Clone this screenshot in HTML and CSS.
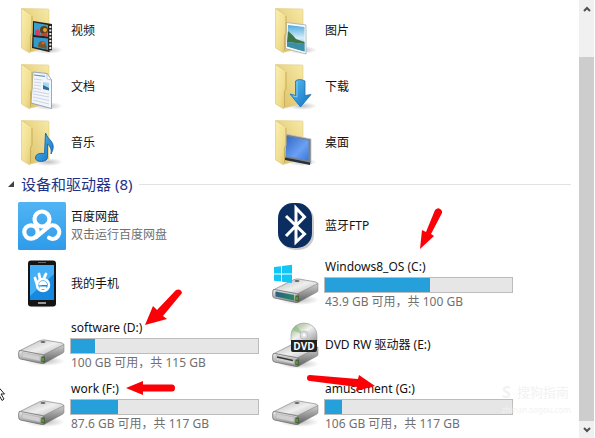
FILE: index.html
```html
<!DOCTYPE html>
<html lang="zh-CN">
  <head>
    <meta charset="UTF-8" />
    <meta name="viewport" content="width=device-width, initial-scale=1.0" />
    <title>设备和驱动器</title>
    <link rel="stylesheet" href="styles.css">
  </head>
  <body>
    <svg class="defs" aria-hidden="true">
      <defs>
        <linearGradient id="flap" x1="0" y1="0" x2="1" y2="1">
          <stop offset="0" stop-color="#fbefae" />
          <stop offset="0.6" stop-color="#f1de90" />
          <stop offset="1" stop-color="#dfc569" />
        </linearGradient>
        <linearGradient id="inside" x1="1" y1="0" x2="0" y2="1">
          <stop offset="0" stop-color="#f7e9a6" />
          <stop offset="1" stop-color="#d9bd62" />
        </linearGradient>
        <linearGradient id="blue" x1="0" y1="0" x2="1" y2="1">
          <stop offset="0" stop-color="#5bc0f0" />
          <stop offset="1" stop-color="#0f6fc4" />
        </linearGradient>
        <linearGradient id="sky" x1="0" y1="0" x2="0" y2="1">
          <stop offset="0" stop-color="#4fa9e0" />
          <stop offset="0.5" stop-color="#d5effa" />
          <stop offset="1" stop-color="#3f8fc4" />
        </linearGradient>
        <linearGradient id="screen" x1="0" y1="0" x2="1" y2="1">
          <stop offset="0" stop-color="#3467c4" />
          <stop offset="0.6" stop-color="#6aa0f4" />
          <stop offset="1" stop-color="#3a78dc" />
        </linearGradient>
        <linearGradient id="lid" x1="0" y1="0" x2="1" y2="1">
          <stop offset="0" stop-color="#b4b4b4" />
          <stop offset="0.5" stop-color="#efefef" />
          <stop offset="1" stop-color="#a8a8a8" />
        </linearGradient>
        <linearGradient id="front" x1="0" y1="0" x2="0" y2="1">
          <stop offset="0" stop-color="#eee" />
          <stop offset="1" stop-color="#888" />
        </linearGradient>
        <linearGradient id="side" x1="0" y1="0" x2="0" y2="1">
          <stop offset="0" stop-color="#d0d0d0" />
          <stop offset="1" stop-color="#5c5c5c" />
        </linearGradient>
        <linearGradient id="teal" x1="0" y1="0" x2="1" y2="0">
          <stop offset="0" stop-color="#2c5f80" />
          <stop offset="1" stop-color="#1f8a68" />
        </linearGradient>
        <linearGradient id="pan" x1="0" y1="0" x2="0" y2="1">
          <stop offset="0" stop-color="#51b4f3" />
          <stop offset="1" stop-color="#2f9bea" />
        </linearGradient>
        <linearGradient id="disc" x1="0" y1="0" x2="1" y2="1">
          <stop offset="0" stop-color="#aaa" />
          <stop offset="0.3" stop-color="#c5d3b8" />
          <stop offset="0.5" stop-color="#f2f2f2" />
          <stop offset="1" stop-color="#999" />
        </linearGradient>
        <radialGradient id="shade">
          <stop offset="0" stop-color="#000" stop-opacity="0.25" />
          <stop offset="1" stop-color="#000" stop-opacity="0" />
        </radialGradient>
      </defs>
      <symbol id="folder" viewBox="0 0 48 48">
        <ellipse cx="30" cy="43" rx="15" ry="4" fill="url(#shade)" />
        <path d="M4 1.500 30 2Q31 2 31 3V40L13 45Z" fill="url(#inside)" stroke="#e3cd80" stroke-width="0.6" />
      </symbol>
      <symbol id="folder-front" viewBox="0 0 48 48">
        <path d="M3.500 1.500 13 7.500Q14 8.500 14 10V26L12.500 29V45Q12 46 11 45.500L3.500 41Z" fill="url(#flap)" stroke="#d9c273" stroke-width="0.6" />
        <path d="M14 9V26L12.500 29V44" fill="none" stroke="#c2a651" stroke-width="0.7" />
      </symbol>
      <symbol id="drive" viewBox="0 0 48 48">
        <ellipse cx="27" cy="40" rx="20" ry="5" fill="url(#shade)" />
        <path d="M1 30 21 20Q24 18.500 27 19L44 22Q47 23 45 25L25 36Z" fill="url(#lid)" stroke="#888" stroke-width="0.7" />
        <path d="M25 34 46 23.500V30Q46 31 45 32L26 42.500Z" fill="url(#side)" stroke="#777" stroke-width="0.5" />
        <path d="M2.500 29.500 24 33.500Q26.500 34 26.500 36V41Q26.500 43 24 42.500L2.500 38Q.7 37.500.7 35.500V31.500Q.7 29.200 2.500 29.500Z" fill="url(#front)" stroke="#6c6c6c" stroke-width="0.8" />
        <path d="M4 31.500 22 35V40L4 36.200Z" fill="#d0d0d0" stroke="#aaa" stroke-width="0.5" />
        <ellipse cx="25" cy="21" rx="2.500" ry="1" fill="#666" />
        <path d="M23.500 35.500H26.500V41.500L23.500 41Z" fill="#274a1c" />
        <path d="M25 36.500V40.500" stroke="#8fe04c" stroke-width="1" />
      </symbol>
    </svg>

    <main class="explorer">
      <div class="content">
        <ul class="grid folders">
          <li class="item">
            <svg class="icon" viewBox="0 0 48 48" aria-hidden="true">
              <use href="#folder" />
              <path d="M15 14 34 17V43L31 45 14 41Z" fill="#25221f" />
              <path d="M16 15.500 30 18V29.500L16 28Z" fill="#3a9fce" />
              <path d="M15.500 30 30 31.500V43L15.500 40Z" fill="#329bcc" />
              <path d="M17 24 20 22 22 25V28.500L17 28Z" fill="#d93e5c" />
              <circle cx="26" cy="23" r="4" fill="#57421c" />
              <circle cx="27" cy="23" r="2" fill="#e7a12c" />
              <path d="M22 28 28 25 30 30Z" fill="#d13f2b" />
              <path d="M20 40Q20 34 24 34T29 42Z" fill="#76572b" />
              <circle cx="25" cy="36" r="1.500" fill="#e05a3b" />
              <path d="M32.300 19V44" stroke="#eee" stroke-width="2" stroke-dasharray="2 1.500" />
              <use href="#folder-front" />
            </svg>
            <span class="name">视频</span>
          </li>
          <li class="item">
            <svg class="icon" viewBox="0 0 48 48" aria-hidden="true">
              <use href="#folder" />
              <path d="M15 9 29 10.500 33.500 17V45.500L13 40Z" fill="#f2f5fb" stroke="#8296b2" stroke-width="0.8" />
              <path d="M29 10.500V16L33.500 17Z" fill="#fff" stroke="#8296b2" stroke-width="0.5" />
              <path d="M16 12 27 13.300" stroke="#5a9acb" stroke-width="1.200" />
              <path d="M16 16 24 17M16 19 23 20M16 22 23 23M15 25 23 26.500M15 28 31 31M15 31 31 34M15 34 31 37.500M15 37 31 41" stroke="#c3cad9" stroke-width="0.8" />
              <path d="M25 19 31 20V27L25 26Z" fill="#a8d6ee" />
              <path d="M25 22 31 25V27.500L25 26Z" fill="#28719d" />
              <use href="#folder-front" />
            </svg>
            <span class="name">文档</span>
          </li>
          <li class="item">
            <svg class="icon" viewBox="0 0 48 48" aria-hidden="true">
              <use href="#folder" />
              <use href="#folder-front" />
              <path d="M27.500 14Q29 18 33 22 37.500 27 33 35 34 28 29.500 25V38Q29.500 42 23.500 42.500 17 42.500 17.500 38 18.500 33.500 26.500 34.500Z" fill="url(#blue)" stroke="#1c65ae" stroke-width="0.9" />
            </svg>
            <span class="name">音乐</span>
          </li>
          <li class="item">
            <svg class="icon" viewBox="0 0 48 48" aria-hidden="true">
              <use href="#folder" />
              <path d="M14.500 15.500 34 18V47L13.500 41.500Z" fill="#fcfcfc" stroke="#a0aab1" stroke-width="0.8" />
              <path d="M16 18 32.500 20V44.500L15 39.500Z" fill="url(#sky)" />
              <path d="M16 24Q21 28 24 32L32.500 35V37L15 35Z" fill="#3d7548" />
              <path d="M15 35 32.500 37V44.500L15 39.500Z" fill="#3b8fa7" />
              <use href="#folder-front" />
            </svg>
            <span class="name">图片</span>
          </li>
          <li class="item">
            <svg class="icon" viewBox="0 0 48 48" aria-hidden="true">
              <use href="#folder" />
              <use href="#folder-front" />
              <path d="M23.500 18Q27 15 33 18V32.500L39 31.500 28.500 44 18 31 23.500 32.500Z" fill="url(#blue)" stroke="#2170ac" stroke-width="0.8" />
              <path d="M25 18.500V34L21 33" fill="none" stroke="#8ed9f7" stroke-width="0.8" />
            </svg>
            <span class="name">下载</span>
          </li>
          <li class="item">
            <svg class="icon" viewBox="0 0 48 48" aria-hidden="true">
              <use href="#folder" />
              <path d="M14 15 39 20V45L13 40Z" fill="#78828a" stroke="#c2c7ca" stroke-width="0.8" />
              <path d="M14 17 36.500 21.500V41.500L14 37Z" fill="url(#screen)" />
              <path d="M13 38.500 38 43.500V46L13 41Z" fill="#28313b" />
              <use href="#folder-front" />
            </svg>
            <span class="name">桌面</span>
          </li>
        </ul>

        <h2 class="section-title">
          <svg class="caret" viewBox="0 0 6 6" aria-hidden="true"><path d="M6 0V6H0Z" fill="#404040" /></svg>
          <span>设备和驱动器 (8)</span>
        </h2>

        <ul class="grid devices">
          <li class="item">
            <svg class="icon" viewBox="0 0 48 48" aria-hidden="true">
              <rect width="48" height="48" rx="1.500" fill="url(#pan)" />
              <g fill="none" stroke="#fff" stroke-width="4.200" stroke-linecap="round">
                <circle cx="24" cy="17" r="7.500" />
                <circle cx="13" cy="30" r="6.700" />
                <path d="M18 35 30 25.200A6.700 6.700 0 1 1 31 35.800" />
              </g>
            </svg>
            <div class="info">
              <span class="name">百度网盘</span>
              <span class="detail">双击运行百度网盘</span>
            </div>
          </li>
          <li class="item">
            <svg class="icon" viewBox="0 0 48 48" aria-hidden="true">
              <ellipse cx="24" cy="45" rx="17" ry="3" fill="url(#shade)" />
              <rect x="10" y="0.500" width="28" height="46" rx="3" fill="#151515" />
              <rect x="12" y="5" width="24" height="35" fill="#1688e0" />
              <path d="M12 5H36V14L12 36Z" fill="#42aef5" />
              <path d="M20 2.500H28" stroke="#666" />
              <rect x="20" y="42" width="8" height="2" fill="#999" />
              <circle cx="25" cy="25" r="6" fill="none" stroke="#fff" stroke-width="2.500" />
              <path d="M19 24 17 18M22 19 21 14M26 18 28 14" stroke="#fff" stroke-width="2.800" stroke-linecap="round" />
              <path d="M21 25A4 4 0 0 1 29 25Z" fill="#fff" />
              <path d="M21.500 26.500H28.500V29H21.500Z" fill="#fff" />
            </svg>
            <span class="name">我的手机</span>
          </li>
          <li class="item">
            <svg class="icon" viewBox="0 0 48 48" aria-hidden="true"><use href="#drive" /></svg>
            <div class="info">
              <label class="name" for="drive-d">software (D:)</label>
              <progress class="usage" id="drive-d" max="100" value="13"></progress>
              <span class="detail">100 GB 可用，共 115 GB</span>
            </div>
            <svg class="arrow arrow-d" viewBox="0 0 42 40" aria-hidden="true">
              <path d="M2 37 10 18 14 22 33 2Q38 0 39 5L20 28 24 31Z" />
            </svg>
          </li>
          <li class="item">
            <svg class="icon" viewBox="0 0 48 48" aria-hidden="true"><use href="#drive" /></svg>
            <div class="info">
              <label class="name" for="drive-f">work (F:)</label>
              <progress class="usage" id="drive-f" max="100" value="25"></progress>
              <span class="detail">87.6 GB 可用，共 117 GB</span>
            </div>
            <svg class="arrow arrow-f" viewBox="0 0 50 16" aria-hidden="true">
              <path d="M0 8 17 1V4.500H46Q49 4.500 49 8T46 11.500H17V15Z" />
            </svg>
          </li>
          <li class="item">
            <svg class="icon" viewBox="0 0 48 48" aria-hidden="true">
              <rect x="8" y="3" width="34" height="45" rx="15" fill="#000" opacity="0.2" />
              <rect x="6" y="1" width="34" height="45" rx="15" fill="#0b2d60" />
              <path d="M14 14 32.500 32 24 40V6L32.500 15 14 34" fill="none" stroke="#fff" stroke-width="3" />
            </svg>
            <span class="name">蓝牙FTP</span>
          </li>
          <li class="item">
            <svg class="icon" viewBox="0 0 48 48" aria-hidden="true">
              <use href="#drive" />
              <path d="M3.500 31.500 22 35V40.500L3.500 36.500Z" fill="url(#teal)" />
              <path d="M2 7 9 6.200V13.500H2ZM10 6 20 4.700V13.500H10ZM2 14.500H9V21.500L2 20.700ZM10 14.500H20V23L10 21.800Z" fill="#12c5f4" />
            </svg>
            <div class="info">
              <label class="name" for="drive-c">Windows8_OS (C:)</label>
              <progress class="usage" id="drive-c" max="100" value="56"></progress>
              <span class="detail">43.9 GB 可用，共 100 GB</span>
            </div>
            <svg class="arrow arrow-c" viewBox="0 0 24 44" aria-hidden="true">
              <path d="M0 41 2 22 6 24 15 2Q19-2 22 3V5L11 26 14 28Z" />
            </svg>
          </li>
          <li class="item">
            <svg class="icon" viewBox="0 0 48 48" aria-hidden="true">
              <g transform="translate(0 3)">
                <use href="#drive" />
                <path d="M5 33 21 36.500" stroke="#333" stroke-width="1.500" />
              </g>
              <path d="M19 20V14A13 12 0 0 1 45 14V20Z" fill="url(#disc)" stroke="#999" stroke-width="0.6" />
              <path d="M32 14 20 9 24 4Z" fill="#72bd6b" opacity="0.5" />
              <circle cx="32" cy="14" r="4" fill="#ddd" stroke="#aaa" stroke-width="0.6" />
              <circle cx="32" cy="14" r="1.500" fill="#fff" />
              <path d="M19 19H45V29Q45 31 43 31H21Q19 31 19 29Z" fill="#222" />
              <text x="32" y="28.500" class="badge">DVD</text>
            </svg>
            <span class="name">DVD RW 驱动器 (E:)</span>
          </li>
          <li class="item">
            <svg class="icon" viewBox="0 0 48 48" aria-hidden="true"><use href="#drive" /></svg>
            <div class="info">
              <label class="name" for="drive-g">amusement (G:)</label>
              <progress class="usage" id="drive-g" max="100" value="9"></progress>
              <span class="detail">106 GB 可用，共 117 GB</span>
            </div>
            <svg class="arrow arrow-g" viewBox="0 0 70 22" aria-hidden="true">
              <path d="M4 2 52 6 53 2 69 13 50 18 51 14 4 8Q1 8 1 5T4 2Z" />
            </svg>
          </li>
        </ul>
      </div>

      <div class="scrollbar">
        <button class="scroll-button" type="button" aria-label="向上滚动">
          <svg viewBox="0 0 8 6" aria-hidden="true"><path d="M1 5 4 2 7 5" /></svg>
        </button>
        <div class="thumb"></div>
        <button class="scroll-button scroll-down" type="button" aria-label="向下滚动">
          <svg viewBox="0 0 8 6" aria-hidden="true"><path d="M1 1 4 4 7 1" /></svg>
        </button>
      </div>

      <div class="watermark">
        <b>S</b>
        <span>搜狗指南</span>
        <small>zhinan.sogou.com</small>
      </div>
      <svg class="cursor" viewBox="0 0 6 16" aria-hidden="true">
        <path d="M-6-4 4.500 8H1L4 13 2 14.500-1 9" fill="#fff" stroke="#222" />
      </svg>
    </main>
  </body>
</html>
```

FILE: styles.css
```css
:root {
  --color-text: #111;
  --color-muted: #707070;
  --color-title: #1e3287;
  --color-fill: #26a0da;
  --color-arrow: #fb0007;
}

* {
  box-sizing: border-box;
}

body {
  margin: 0;
  font-family: "Noto Sans", "Noto Sans CJK SC", sans-serif;
  font-size: 12px;
  line-height: 18px;
  color: var(--color-text);
  background-color: #fff;
}

.defs {
  position: absolute;
  width: 0;
  height: 0;
}

.explorer {
  position: relative;
  display: flex;
  min-height: 100vh;
  overflow: hidden;
}

.content {
  flex: 1;
  padding: 7px 8px 0;
}

.grid {
  display: grid;
  grid-auto-flow: column;
  grid-auto-columns: 254px;
  margin: 0;
  padding: 0 0 0 10px;
  list-style: none;
}

.folders {
  grid-template-rows: repeat(3, auto);
  row-gap: 8px;
}

.devices {
  grid-template-rows: repeat(4, auto);
  row-gap: 7px;
}

.item {
  position: relative;
  display: flex;
  align-items: center;
  gap: 4px;
}

.icon {
  flex: none;
  width: 48px;
  height: 48px;
}

.info {
  display: flex;
  flex-direction: column;
}

.name,
.detail {
  padding-left: 1px;
  white-space: nowrap;
}

.detail {
  color: var(--color-muted);
}

label.name {
  line-height: 20px;
}

.usage {
  display: block;
  width: 189px;
  height: 16px;
  appearance: none;
  border: 1px solid #bcbcbc;
  background-color: #e6e6e6;
}

.usage::-webkit-progress-bar {
  background-color: #e6e6e6;
}

.usage::-webkit-progress-value {
  background-color: var(--color-fill);
}

.badge {
  font: bold 10px "Open Sans", sans-serif;
  text-anchor: middle;
  fill: #fff;
}

.section-title {
  display: flex;
  align-items: center;
  gap: 7px;
  margin: 4px 0 5px;
  font-size: 15px;
  font-weight: normal;
  line-height: 26px;
  color: var(--color-title);
}

.section-title::after {
  content: "";
  flex: 1;
  height: 1px;
  background-color: #e2e2e2;
}

.caret {
  width: 6px;
  height: 6px;
}

.scrollbar {
  display: flex;
  flex-direction: column;
  width: 15px;
  margin-right: 1px;
  background-color: #f0f0f0;
}

.scroll-button {
  display: flex;
  justify-content: center;
  height: 17px;
  padding: 6px 0 0;
  border: 0;
  background: none;
}

.scroll-button svg {
  width: 8px;
  height: 6px;
  fill: none;
  stroke: #505050;
  stroke-width: 2;
}

.thumb {
  flex: 1;
  margin-top: 40px;
  background-color: #cdcdcd;
}

/* pointers drawn over the drives */
.arrow {
  position: absolute;
  fill: var(--color-arrow);
}

.arrow-c {
  top: -49px;
  left: 148px;
  width: 24px;
  height: 44px;
}

.arrow-d {
  top: -30px;
  left: 125px;
  width: 42px;
  height: 40px;
}

.arrow-f {
  top: 1px;
  left: 108px;
  width: 50px;
  height: 16px;
}

.arrow-g {
  top: -6px;
  left: 34px;
  width: 70px;
  height: 22px;
}

.watermark {
  position: absolute;
  right: 24px;
  bottom: 22px;
  display: grid;
  grid-template-columns: auto auto;
  align-items: center;
  justify-content: start;
  gap: 3px 4px;
  font-size: 13px;
  color: #f2f2f2;
}

.watermark b {
  font-size: 16px;
}

.watermark small {
  grid-column: 1 / 3;
  font-size: 8px;
  line-height: 12px;
}

.cursor {
  position: absolute;
  bottom: 36px;
  left: 0;
  width: 6px;
  height: 16px;
}
```
